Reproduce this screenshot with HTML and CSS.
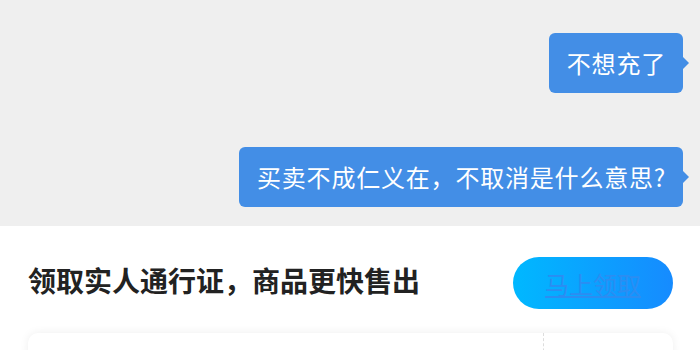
FILE: index.html
```html
<!DOCTYPE html>
<html lang="zh-CN">
<head>
  <meta charset="UTF-8" />
  <meta name="viewport" content="width=device-width, initial-scale=1.0"/>
  <title>聊天</title>
  <link rel="stylesheet" href="styles.css">
</head>
<body>

  <div class="chat">
    <div class="msg">
      <div class="bubble">不想充了</div>
    </div>
    <div class="msg">
      <div class="bubble">买卖不成仁义在，不取消是什么意思?</div>
    </div>
  </div>

  <div class="panel">
    <div class="promo">
      <div class="promo-title">领取实人通行证，商品更快售出</div>
      <a href="#" class="promo-btn">马上领取</a>
    </div>
    <div class="card">
      <div class="card-main"></div>
      <div class="card-side"></div>
    </div>
  </div>

</body>
</html>
```

FILE: styles.css
```css
* {
  box-sizing: border-box;
}
body {
  margin: 0;
  background: #fff;
  font-family: "Noto Sans CJK SC", "Noto Sans", sans-serif;
  overflow: hidden;
}
.chat {
  background: #efefef;
  height: 226px;
  padding: 33px 17px 0 0;
  display: flex;
  flex-direction: column;
  align-items: flex-end;
  gap: 54px;
}
.msg {
  display: flex;
  justify-content: flex-end;
}
.bubble {
  position: relative;
  background: #438ee6;
  color: #fff;
  font-size: 24px;
  line-height: 36px;
  letter-spacing: 0.8px;
  padding: 12px 17px 12px 18px;
  border-radius: 6px;
  white-space: nowrap;
}
.bubble::after {
  content: "";
  position: absolute;
  right: -6px;
  top: 50%;
  margin-top: -6px;
  border-left: 6px solid #438ee6;
  border-top: 6px solid transparent;
  border-bottom: 6px solid transparent;
}
.panel {
  padding: 31px 27px 0 28px;
}
.promo {
  display: flex;
  justify-content: space-between;
  align-items: center;
}
.promo-title {
  font-size: 28px;
  font-weight: bold;
  color: #222;
  margin-bottom: 6px;
}
.promo-btn {
  width: 160px;
  height: 52px;
  border-radius: 26px;
  background: linear-gradient(90deg, #00b8ff, #168bff);
  color: #2b8df2;
  font-size: 24px;
  display: flex;
  align-items: center;
  justify-content: center;
  text-decoration: underline;
}
.card {
  margin-top: 24px;
  height: 80px;
  border-radius: 10px;
  background: #fff;
  box-shadow: 0 0 10px rgba(0, 0, 0, 0.07);
  display: flex;
}
.card-main {
  width: 516px;
  border-right: 1px dashed #ddd;
}
.card-side {
  flex: 1;
}
```
